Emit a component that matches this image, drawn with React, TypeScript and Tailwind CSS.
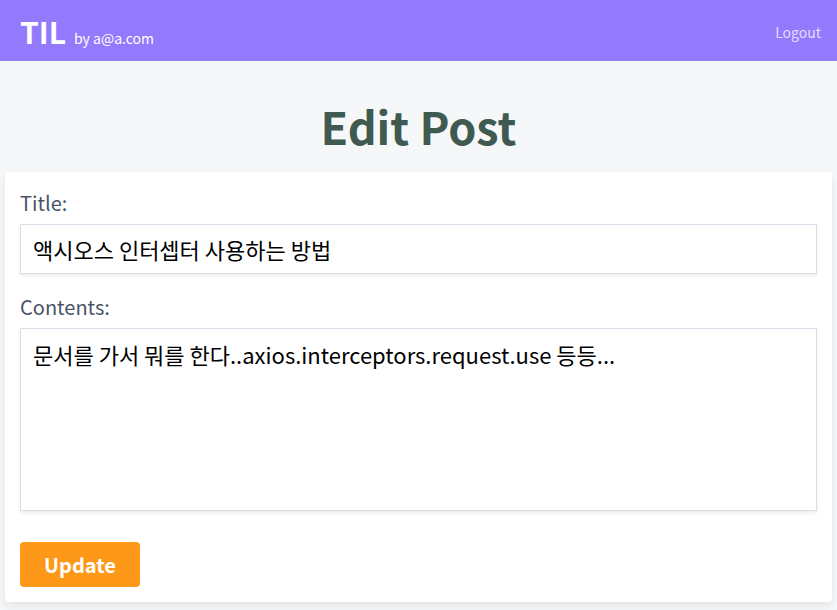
const font = { fontFamily: '"Noto Sans CJK KR", "Noto Sans", sans-serif' };

export default function App() {
  return (
    <div className="min-h-[610px] bg-[#f6f7f9]" style={font}>
      <header className="flex h-[61px] items-center justify-between bg-[#9379fc] pl-5 pr-4">
        <div className="flex items-baseline gap-2 pt-[3px] text-white">
          <span className="text-[30px] font-bold leading-none">TIL</span>
          <span className="text-[14px]">by a@a.com</span>
        </div>
        <button className="pt-[4px] text-[14px] text-[#e4ddfe]">Logout</button>
      </header>

      <h1 className="pt-[32px] pb-[14px] text-center text-[45px] font-bold leading-[65px] text-[#3f5a51]">
        Edit Post
      </h1>

      <form className="mx-[5px] flex flex-col rounded bg-white px-[15px] pt-4 pb-[15px] shadow-[0_4px_10px_rgba(0,0,0,0.08)]">
        <label className="text-[20px] leading-[30px] text-[#4a5468]">Title:</label>
        <input
          className="mt-[6px] h-[50px] border border-[#d5dfe9] px-3 text-[22px] text-black shadow-[0_2px_4px_rgba(0,0,0,0.08)] outline-none"
          defaultValue="액시오스 인터셉터 사용하는 방법"
        />
        <label className="mt-[18px] text-[20px] leading-[30px] text-[#4a5468]">Contents:</label>
        <textarea
          className="mt-[6px] h-[183px] resize-none border border-[#d5dfe9] px-3 pt-[9px] text-[22px] text-black shadow-[0_2px_4px_rgba(0,0,0,0.08)] outline-none"
          defaultValue="문서를 가서 뭐를 한다..axios.interceptors.request.use 등등..."
        />
        <div className="mt-[31px]">
          <button
            type="button"
            className="h-[45px] w-[120px] rounded bg-[#fd9819] text-[20px] font-bold text-white"
          >
            Update
          </button>
        </div>
      </form>
    </div>
  );
}
